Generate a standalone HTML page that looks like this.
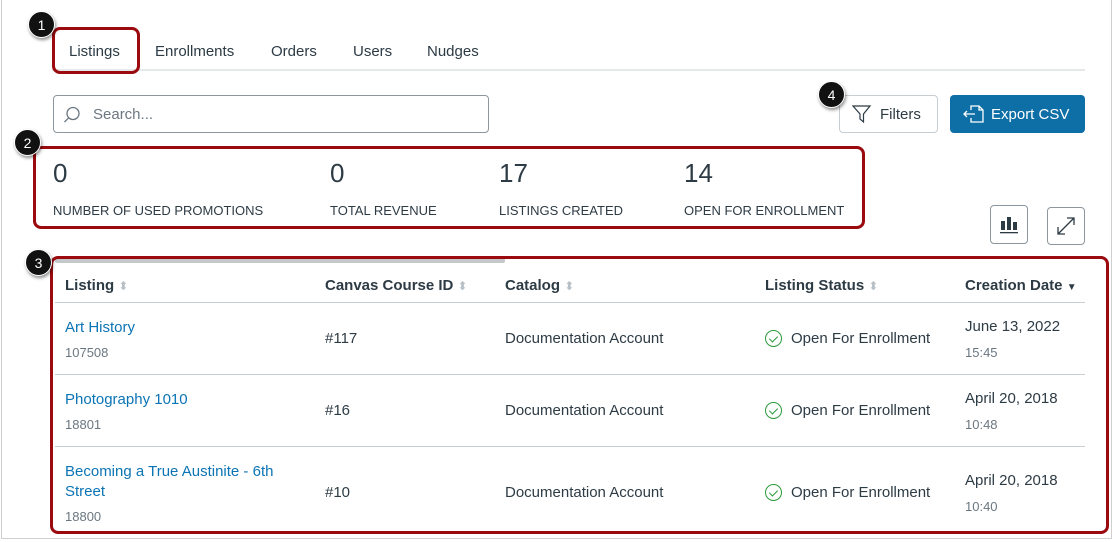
<!DOCTYPE html>
<html><head><style>
*{box-sizing:border-box;margin:0;padding:0}
body{width:1116px;height:542px;background:#fff;font-family:"Liberation Sans",sans-serif;color:#2d3b45;position:relative;overflow:hidden}
.frame{position:absolute;left:1px;top:0;width:1111px;height:539px;border:1px solid #cfcfcf;border-top:none}
.abs{position:absolute}
.red{position:absolute;border:3px solid #9a0a0f;border-radius:8px}
.badge{position:absolute;width:27px;height:27px;border-radius:50%;background:#111;color:#fff;font-size:14px;text-align:center;line-height:27px;box-shadow:1px 2px 3px rgba(0,0,0,.45);border:1px solid #fff}
.tab{position:absolute;top:43px;font-size:15px;color:#2d3b45}
.num{position:absolute;top:158px;font-size:26px;color:#2d3b45}
.lbl{position:absolute;top:203px;font-size:13px;color:#2d3b45}
.th{position:absolute;top:277px;font-size:15px;font-weight:bold;color:#2d3b45}
.sort{color:#b8c0c7;font-size:12px;font-weight:normal}
.hr{position:absolute;left:55px;width:1030px;height:1px;background:#c7cdd1}
.link{position:absolute;color:#0b74b4;font-size:15px;line-height:20px}
.sub{position:absolute;color:#6b7780;font-size:13px}
.cell{position:absolute;font-size:15px}
.chk{position:absolute;width:17px;height:17px;border:1.3px solid #2a9b3a;border-radius:50%}
.chk::after{content:"";position:absolute;left:4.5px;top:2.5px;width:4px;height:7px;border:solid #2a9b3a;border-width:0 1.3px 1.3px 0;transform:rotate(45deg)}
</style></head><body>
<div class="frame"></div>
<div class="abs" style="left:52px;top:69px;width:1033px;height:2px;background:#e6e9ea"></div>
<div class="tab" style="left:69px">Listings</div>
<div class="tab" style="left:155px">Enrollments</div>
<div class="tab" style="left:271px">Orders</div>
<div class="tab" style="left:353px">Users</div>
<div class="tab" style="left:427px">Nudges</div>
<div class="red" style="left:52px;top:27px;width:88px;height:47px"></div>
<div class="badge" style="left:28px;top:11px">1</div>
<div class="abs" style="left:53px;top:95px;width:436px;height:38px;border:1px solid #8b969e;border-radius:4px"></div>
<svg class="abs" style="left:63px;top:106px" width="18" height="18" viewBox="0 0 18 18"><circle cx="10" cy="7.5" r="6" fill="none" stroke="#6b7780" stroke-width="1.3"/><path d="M5.8 11.7L1.5 16" stroke="#6b7780" stroke-width="1.3"/></svg>
<div class="abs" style="left:93px;top:106px;font-size:15px;color:#6b7780">Search...</div>
<div class="abs" style="left:839px;top:95px;width:99px;height:38px;border:1px solid #c7cdd1;border-radius:4px;background:#fff"></div>
<svg class="abs" style="left:852px;top:104px" width="20" height="20" viewBox="0 0 20 20"><path d="M1 2H18L11.5 10V18L8 15V10Z" fill="none" stroke="#2d3b45" stroke-width="1.2"/></svg>
<div class="abs" style="left:880px;top:106px;font-size:15px">Filters</div>
<div class="abs" style="left:950px;top:95px;width:135px;height:38px;border-radius:4px;background:#0e6ea6"></div>
<svg class="abs" style="left:962px;top:104px" width="24" height="20" viewBox="0 0 24 20"><path d="M9 6V2H17L21 6V18H9V14M17 2V6H21" fill="none" stroke="#fff" stroke-width="1.3"/><path d="M13 10H2M5 7L2 10L5 13" fill="none" stroke="#fff" stroke-width="1.3"/></svg>
<div class="abs" style="left:991px;top:106px;font-size:15px;color:#fff">Export CSV</div>
<div class="badge" style="left:818px;top:81px">4</div>
<div class="num" style="left:53px">0</div><div class="lbl" style="left:53px">NUMBER OF USED PROMOTIONS</div>
<div class="num" style="left:330px">0</div><div class="lbl" style="left:330px">TOTAL REVENUE</div>
<div class="num" style="left:499px">17</div><div class="lbl" style="left:499px">LISTINGS CREATED</div>
<div class="num" style="left:684px">14</div><div class="lbl" style="left:684px">OPEN FOR ENROLLMENT</div>
<div class="red" style="left:33px;top:146px;width:832px;height:83px"></div>
<div class="badge" style="left:14px;top:129px">2</div>
<div class="abs" style="left:990px;top:205px;width:38px;height:39px;border:1px solid #8b969e;border-radius:4px"></div>
<svg class="abs" style="left:998px;top:213px" width="22" height="22" viewBox="0 0 22 22"><rect x="3" y="8" width="4" height="9" fill="#2d3b45"/><rect x="9" y="4" width="4" height="13" fill="#2d3b45"/><rect x="15" y="9" width="4" height="8" fill="#2d3b45"/><rect x="2" y="19" width="18" height="1.3" fill="#2d3b45"/></svg>
<div class="abs" style="left:1047px;top:207px;width:38px;height:38px;border:1px solid #8b969e;border-radius:4px"></div>
<svg class="abs" style="left:1055px;top:215px" width="22" height="22" viewBox="0 0 22 22"><path d="M3 19L19 3M12 3H19V10M3 12V19H10" fill="none" stroke="#2d3b45" stroke-width="1.3"/></svg>
<div class="abs" style="left:55px;top:258px;width:450px;height:5px;background:#c4c8cb;border-radius:2px"></div>
<div class="th" style="left:65px">Listing <span class="sort">⬍</span></div>
<div class="th" style="left:325px">Canvas Course ID <span class="sort">⬍</span></div>
<div class="th" style="left:505px">Catalog <span class="sort">⬍</span></div>
<div class="th" style="left:765px">Listing Status <span class="sort">⬍</span></div>
<div class="th" style="left:965px">Creation Date <span style="font-size:10px">▼</span></div>
<div class="hr" style="top:302px"></div>
<div class="hr" style="top:374px"></div>
<div class="hr" style="top:446px"></div>

<div class="link" style="left:65px;top:318px">Art History</div>
<div class="sub" style="left:65px;top:345px">107508</div>
<div class="cell" style="left:325px;top:330px">#117</div>
<div class="cell" style="left:505px;top:330px">Documentation Account</div>
<div class="chk" style="left:765px;top:330px"></div>
<div class="cell" style="left:791px;top:330px">Open For Enrollment</div>
<div class="cell" style="left:965px;top:318px">June 13, 2022</div>
<div class="sub" style="left:965px;top:345px">15:45</div>

<div class="link" style="left:65px;top:390px">Photography 1010</div>
<div class="sub" style="left:65px;top:417px">18801</div>
<div class="cell" style="left:325px;top:402px">#16</div>
<div class="cell" style="left:505px;top:402px">Documentation Account</div>
<div class="chk" style="left:765px;top:402px"></div>
<div class="cell" style="left:791px;top:402px">Open For Enrollment</div>
<div class="cell" style="left:965px;top:390px">April 20, 2018</div>
<div class="sub" style="left:965px;top:417px">10:48</div>

<div class="link" style="left:65px;top:462px">Becoming a True Austinite - 6th<br>Street</div>
<div class="sub" style="left:65px;top:509px">18800</div>
<div class="cell" style="left:325px;top:484px">#10</div>
<div class="cell" style="left:505px;top:484px">Documentation Account</div>
<div class="chk" style="left:765px;top:484px"></div>
<div class="cell" style="left:791px;top:484px">Open For Enrollment</div>
<div class="cell" style="left:965px;top:472px">April 20, 2018</div>
<div class="sub" style="left:965px;top:499px">10:40</div>

<div class="red" style="left:50px;top:256px;width:1059px;height:278px"></div>
<div class="badge" style="left:25px;top:249px">3</div>
</body></html>
